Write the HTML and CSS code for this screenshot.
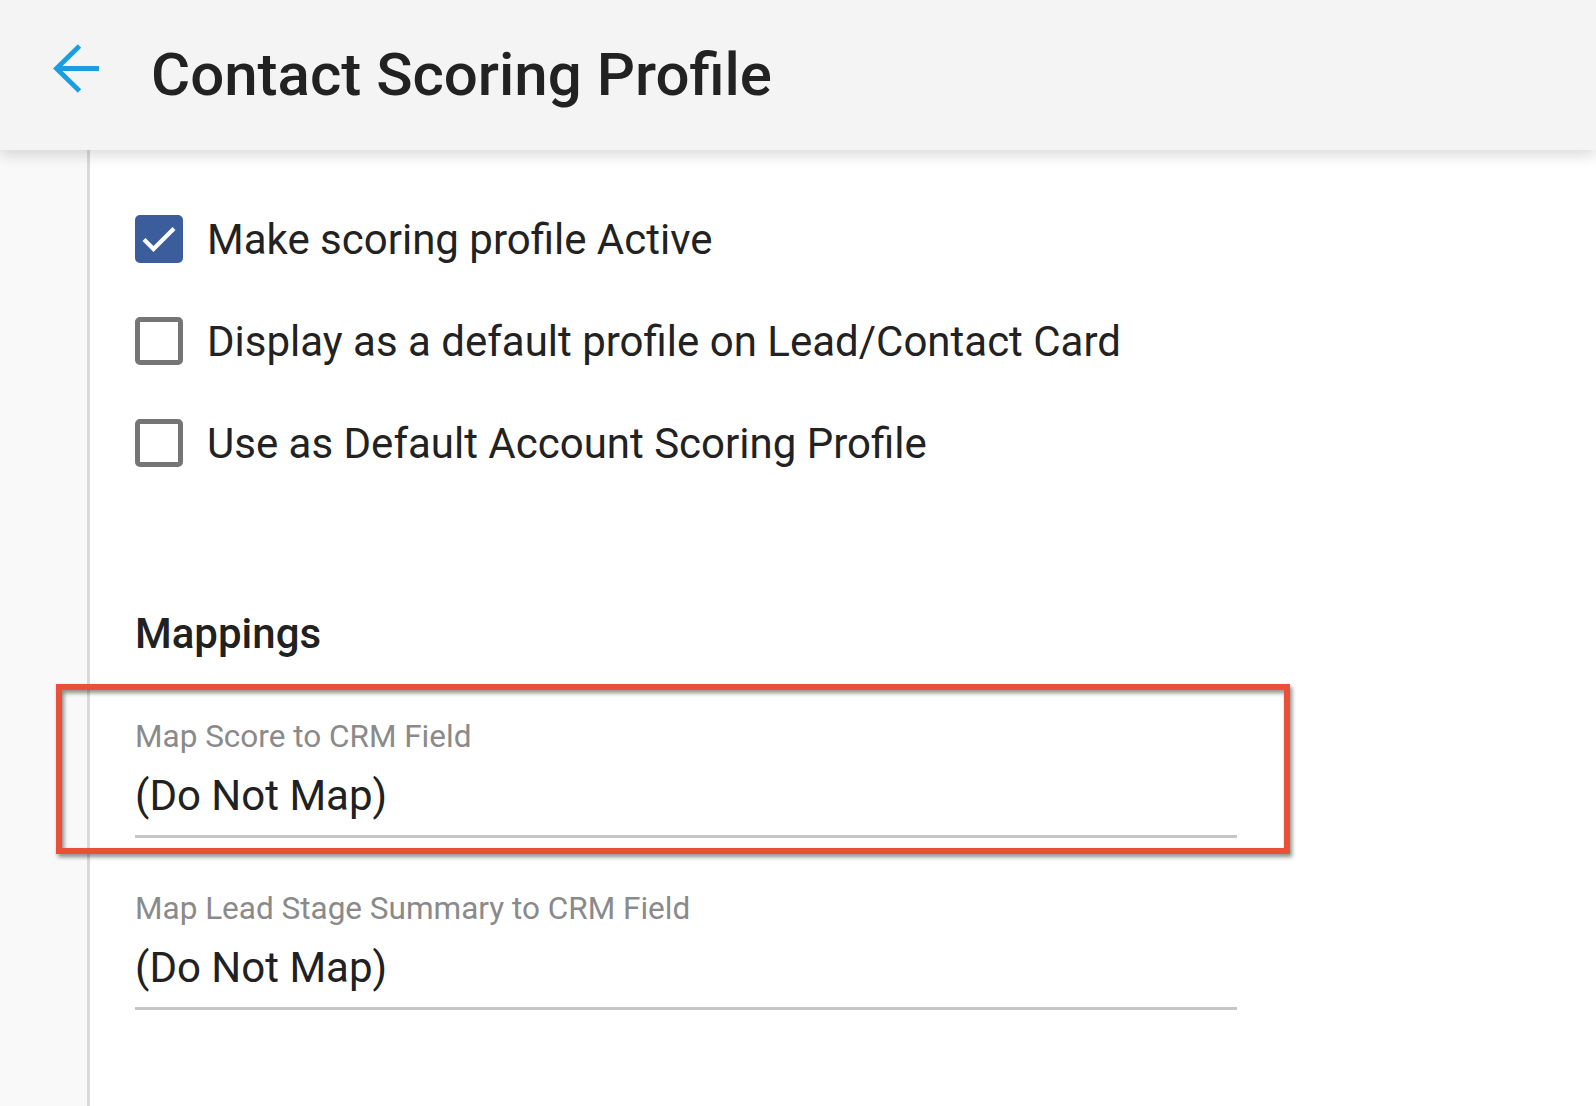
FILE: index.html
```html
<!DOCTYPE html>
<html lang="en">
<head>
<meta charset="utf-8">
<title>Contact Scoring Profile</title>
<link rel="stylesheet" href="styles.css">
</head>
<body>
<header class="topbar">
  <svg class="back" width="50" height="50" viewBox="0 0 50 50" aria-hidden="true">
    <path d="M6.5 24.5 H49 M29.5 2 L6.5 24.5 L29.5 47" fill="none" stroke="#1a9ee0" stroke-width="4.8"/>
  </svg>
  <h1 class="title">Contact Scoring Profile</h1>
</header>
<div class="page">
  <aside class="sidebar"></aside>
  <main class="content">
    <div class="options">
      <label class="option">
        <span class="box box-checked">
          <svg width="48" height="48" viewBox="0 0 48 48" aria-hidden="true"><path d="M9 24.5 L18.5 34 L39 13.5" fill="none" stroke="#fff" stroke-width="4.2"/></svg>
        </span>
        <span class="option-text">Make scoring profile Active</span>
      </label>
      <label class="option">
        <span class="box"></span>
        <span class="option-text">Display as a default profile on Lead/Contact Card</span>
      </label>
      <label class="option">
        <span class="box"></span>
        <span class="option-text">Use as Default Account Scoring Profile</span>
      </label>
    </div>
    <h2 class="section-title">Mappings</h2>
    <div class="field field-highlight">
      <div class="field-label">Map Score to CRM Field</div>
      <div class="field-value">(Do Not Map)</div>
      <div class="highlight"></div>
    </div>
    <div class="field">
      <div class="field-label">Map Lead Stage Summary to CRM Field</div>
      <div class="field-value">(Do Not Map)</div>
    </div>
  </main>
</div>
</body>
</html>
```

FILE: styles.css
```css
html, body {
  margin: 0;
  padding: 0;
  background: #ffffff;
}
body {
  font-family: Roboto, "Noto Sans", "Liberation Sans", sans-serif;
  color: #212121;
  overflow: hidden;
  height: 1106px;
}
.topbar {
  height: 150px;
  background: #f4f4f4;
  box-shadow: 0 5px 14px rgba(0, 0, 0, 0.15);
  display: flex;
  align-items: center;
  position: relative;
  z-index: 2;
  padding-left: 50px;
}
.back {
  align-self: flex-start;
  margin-top: 44px;
  flex: none;
}
.title {
  margin: 0 0 0 51px;
  font-size: 60px;
  font-weight: 500;
  color: #222222;
  line-height: 1;
}
.page {
  display: flex;
  height: 956px;
}
.sidebar {
  width: 87px;
  flex: none;
  background: #f9f9f9;
  border-right: 3px solid #d9d9d9;
}
.content {
  flex: 1;
  padding: 65px 0 0 45px;
}
.options {
  display: flex;
  flex-direction: column;
  gap: 54px;
}
.option {
  display: flex;
  align-items: center;
  gap: 24px;
  height: 48px;
  font-size: 42px;
  color: #222222;
}
.box {
  width: 48px;
  height: 48px;
  box-sizing: border-box;
  border: 5px solid #757575;
  border-radius: 5px;
  flex: none;
}
.box-checked {
  border: none;
  background: #3b5d9c;
}
.box-checked svg {
  display: block;
}
.section-title {
  margin: 143px 0 0 0;
  font-size: 42px;
  font-weight: 500;
  line-height: 48px;
  color: #212121;
}
.field {
  position: relative;
  width: 1102px;
  border-bottom: 3px solid #c6c6c6;
  margin-top: 51px;
}
.field-highlight {
  margin-top: 59px;
}
.field-label {
  font-size: 31.5px;
  line-height: 40px;
  color: #8a8a8a;
}
.field-value {
  margin-top: 14px;
  font-size: 42px;
  line-height: 50px;
  padding-bottom: 14px;
  color: #212121;
}
.highlight {
  position: absolute;
  left: -79px;
  top: -33px;
  width: 1234px;
  height: 170px;
  box-sizing: border-box;
  border: 6px solid #e9503a;
  filter: drop-shadow(2px 3px 2px rgba(0, 0, 0, 0.45));
  pointer-events: none;
}
```
